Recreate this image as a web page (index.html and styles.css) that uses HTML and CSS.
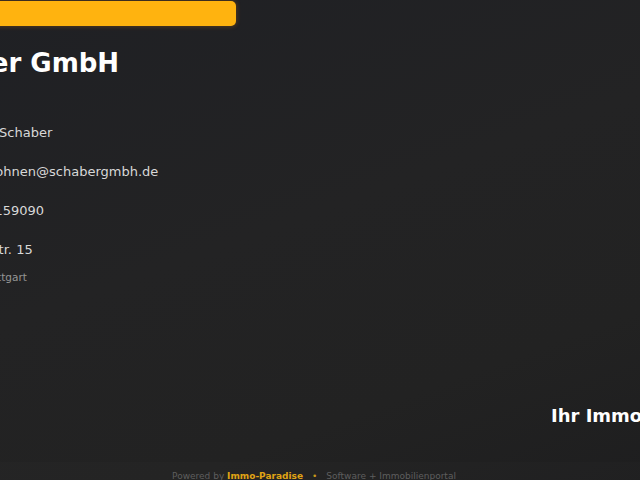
FILE: index.html
```html
<!DOCTYPE html>
<html lang="de">
<head>
<meta charset="utf-8">
<title>Schaber GmbH</title>
<link rel="stylesheet" href="styles.css">
</head>
<body>
<div class="page">
  <main class="layout">
    <section class="info">
      <div class="cta"></div>
      <h1 class="title">Schaber GmbH</h1>
      <ul class="contacts">
        <li class="row"><span class="ico"></span><span class="val">Wolfgang Schaber</span></li>
        <li class="row"><span class="ico"></span><span class="val">service.wohnen@schabergmbh.de</span></li>
        <li class="row"><span class="ico"></span><span class="val">+49 711 159090</span></li>
        <li class="row"><span class="ico"></span>
          <span class="val">Rotebühlstr. 15<span class="city">D-70173 Stuttgart</span></span>
        </li>
      </ul>
    </section>
    <section class="hero">
      <h2 class="hero-title">Ihr Immobilienpartner in Stuttgart</h2>
    </section>
  </main>
  <footer class="footer">
    Powered by <strong class="brand">Immo-Paradise</strong><span class="sep">•</span>Software + Immobilienportal
  </footer>
</div>
</body>
</html>
```

FILE: styles.css
```css
html, body {
  margin: 0;
  padding: 0;
  height: 100%;
  overflow: hidden;
}

body {
  font-family: "DejaVu Sans", Verdana, sans-serif;
  background: #202124;
  color: #d6d6d6;
}

.page {
  display: flex;
  flex-direction: column;
  min-height: 100vh;
  background: linear-gradient(160deg, #1f2024 0%, #232324 45%, #222222 75%, #1e1e1f 100%);
}

.layout {
  display: flex;
  height: 462px;
  overflow: hidden;
}

.info {
  flex: 0 0 334px;
  margin-left: -98px;
}

.cta {
  margin-top: 1px;
  height: 25px;
  background: #ffb30f;
  border-radius: 0 5px 5px 0;
  box-shadow: 0 0 4px 1px rgba(255, 140, 0, 0.22);
}

.title {
  margin: 21px 0 0;
  font-size: 26px;
  line-height: 32px;
  font-weight: bold;
  color: #ffffff;
  white-space: nowrap;
}

.contacts {
  list-style: none;
  margin: 44px 0 0;
  padding: 0;
  display: flex;
  flex-direction: column;
  gap: 20px;
}

.row {
  display: flex;
  gap: 12px;
  font-size: 13px;
  line-height: 19px;
  white-space: nowrap;
}

.ico {
  flex: 0 0 20px;
  height: 19px;
}

.val {
  display: flex;
  flex-direction: column;
  color: #d8d8d8;
}

.city {
  margin-top: 10px;
  font-size: 10.5px;
  line-height: 16px;
  word-spacing: -3px;
  color: #959595;
}

.hero {
  flex: 1;
  min-width: 0;
  padding: 406px 0 0 315px;
  overflow: hidden;
}

.hero-title {
  margin: 0;
  font-size: 18px;
  line-height: 20px;
  font-weight: bold;
  color: #ffffff;
  white-space: nowrap;
}

.footer {
  padding: 8px 12px 10px 0;
  text-align: center;
  font-size: 9px;
  line-height: 12px;
  color: #5e5e5e;
  background: rgba(255, 255, 255, 0.012);
  white-space: nowrap;
}

.brand {
  color: #e0a414;
  font-weight: bold;
}

.sep {
  margin: 0 9px;
  color: #c8961a;
}
```
